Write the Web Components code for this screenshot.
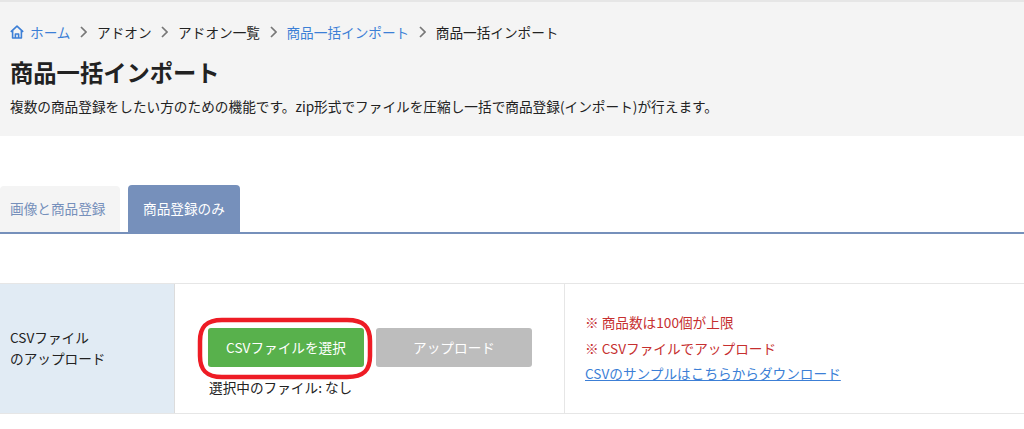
<!DOCTYPE html>
<html lang="ja">
<head>
<meta charset="utf-8">
<title>商品一括インポート</title>
<style>
  html, body { margin: 0; background: #fff; }
  body {
    font-family: "Noto Sans CJK JP", "Noto Sans", sans-serif;
    color: #222;
    overflow: hidden;
  }
</style>
</head>
<body>
<page-header></page-header>
<tab-bar></tab-bar>
<upload-row></upload-row>

<script>
class PageHeader extends HTMLElement {
  constructor() {
    super();
    this.attachShadow({ mode: 'open' });
  }

  connectedCallback() {
    this.shadowRoot.innerHTML = `
      <style>
        :host {
          display: block;
          height: 134px;
          background: #f4f4f4;
          border-top: 2px solid #e6e6e6;
          padding: 0 10px;
        }
        nav {
          display: flex;
          align-items: center;
          height: 20px;
          padding-top: 20px;
          font-size: 13.65px;
          color: #222;
          white-space: nowrap;
        }
        a { color: #3c7fd6; text-decoration: none; }
        .home { display: flex; align-items: center; gap: 6px; }
        h1 {
          margin: 13px 0 0;
          font-size: 23.3px;
          line-height: 34px;
          font-weight: 700;
          color: #222;
        }
        p {
          margin: 7px 0 0;
          font-size: 13.67px;
          line-height: 20px;
          font-weight: 400;
          white-space: nowrap;
        }
      </style>
      <nav>
        <a class="home" href="#">
          <svg width="14" height="14" viewBox="0 0 14 14" fill="none" stroke="#3c7fd6" stroke-width="1.6" stroke-linejoin="round">
            <path d="M.8 6.8 7 1.2l6.2 5.6"/>
            <path d="M2.6 5.6V13h8.8V5.6"/>
            <path d="M5.4 13V9h3.2v4"/>
          </svg>
          ホーム
        </a>
        <chevron-sep></chevron-sep>
        <span>アドオン</span>
        <chevron-sep></chevron-sep>
        <span>アドオン一覧</span>
        <chevron-sep></chevron-sep>
        <a href="#">商品一括インポート</a>
        <chevron-sep></chevron-sep>
        <span>商品一括インポート</span>
      </nav>
      <h1>商品一括インポート</h1>
      <p>複数の商品登録をしたい方のための機能です。zip形式でファイルを圧縮し一括で商品登録(インポート)が行えます。</p>
    `;
  }
}

class ChevronSep extends HTMLElement {
  constructor() {
    super();
    this.attachShadow({ mode: 'open' });
    this.shadowRoot.innerHTML = `
      <style>
        :host { display: flex; width: 26.5px; justify-content: center; align-items: center; }
      </style>
      <svg width="7" height="12" viewBox="0 0 7 12" fill="none" stroke="#777" stroke-width="1.7">
        <path d="M1 1l5 5-5 5"/>
      </svg>
    `;
  }
}

class TabBar extends HTMLElement {
  constructor() {
    super();
    this.attachShadow({ mode: 'open' });
  }

  connectedCallback() {
    this.shadowRoot.innerHTML = `
      <style>
        :host {
          display: flex;
          align-items: flex-end;
          gap: 8px;
          height: 47px;
          margin-top: 49px;
          border-bottom: 2px solid #7690bb;
        }
        .tab {
          display: flex;
          align-items: center;
          box-sizing: border-box;
          height: 46px;
          padding-bottom: 2px;
          font-size: 13.65px;
          border-radius: 4px 4px 0 0;
        }
        .off { width: 120px; padding-left: 10px; background: #f4f4f4; color: #7690bb; }
        .on { width: 112px; height: 47px; padding-left: 15px; background: #7690bb; color: #fff; }
      </style>
      <div class="tab off">画像と商品登録</div>
      <div class="tab on">商品登録のみ</div>
    `;
  }
}

class UploadRow extends HTMLElement {
  constructor() {
    super();
    this.attachShadow({ mode: 'open' });
  }

  connectedCallback() {
    this.shadowRoot.innerHTML = `
      <style>
        :host {
          display: grid;
          grid-template-columns: 175px 389px 1fr;
          height: 129px;
          margin-top: 49px;
          border-top: 1px solid #e6e6e6;
          border-bottom: 1px solid #e6e6e6;
          font-size: 13.65px;
        }
        .label {
          display: flex;
          align-items: center;
          padding: 0 0 2px 10px;
          background: #e1ebf4;
          border-right: 1px solid #dcdcdc;
          line-height: 21px;
        }
        .actions { padding: 44px 0 0 33px; }
        .buttons { display: flex; gap: 12px; }
        .btn {
          position: relative;
          display: flex;
          align-items: center;
          justify-content: center;
          box-sizing: border-box;
          width: 156px;
          height: 39px;
          padding-bottom: 2px;
          border-radius: 3px;
          color: #fff;
        }
        .choose { background: #58b14c; }
        .ring {
          position: absolute;
          left: -11px;
          top: -11px;
        }
        .upload { background: #bdbdbd; }
        .file { margin: 10px 0 0 1px; line-height: 20px; }
        .notes {
          border-left: 1px solid #e6e6e6;
          padding: 26px 0 0 20px;
          line-height: 25.5px;
        }
        .notes div { color: #c62f2f; }
        a { color: #3c7fd6; }
      </style>
      <div class="label">CSVファイル<br>のアップロード</div>
      <div class="actions">
        <div class="buttons">
          <div class="btn choose">CSVファイルを選択
            <svg class="ring" width="176" height="63" viewBox="0 0 176 63" fill="none" stroke="#ee1c25" stroke-width="4.5">
              <path d="M25 3H150C167 3 173 10 173 24V39C173 53 167 60 150 60H25C9 60 3 53 3 39V24C3 10 9 3 25 3Z"/>
            </svg>
          </div>
          <div class="btn upload">アップロード</div>
        </div>
        <div class="file">選択中のファイル: なし</div>
      </div>
      <div class="notes">
        <div>※ 商品数は100個が上限</div>
        <div>※ CSVファイルでアップロード</div>
        <a href="#">CSVのサンプルはこちらからダウンロード</a>
      </div>
    `;
  }
}

customElements.define('chevron-sep', ChevronSep);
customElements.define('page-header', PageHeader);
customElements.define('tab-bar', TabBar);
customElements.define('upload-row', UploadRow);
</script>
</body>
</html>
